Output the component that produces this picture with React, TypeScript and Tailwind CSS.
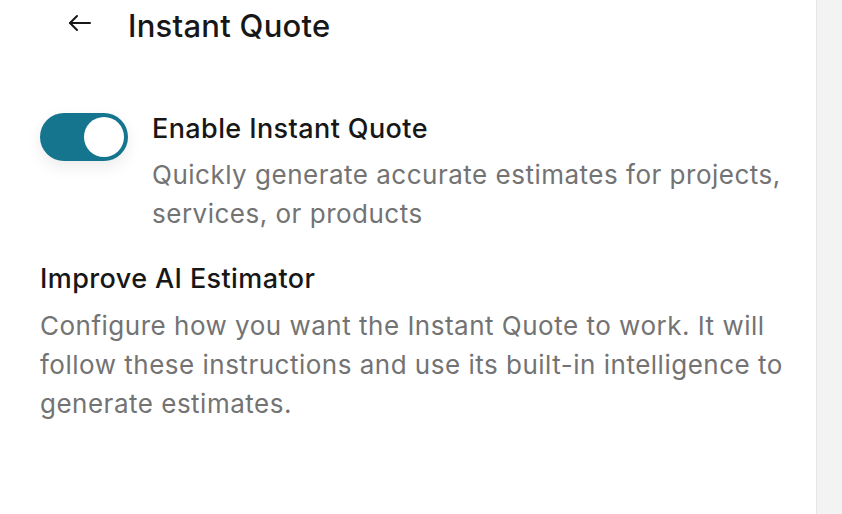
import React, { useState } from 'react';

const BackArrow: React.FC = () => (
  <svg width="24" height="18" viewBox="0 0 24 18" fill="none" stroke="#171717" strokeWidth="2" strokeLinecap="round" strokeLinejoin="round">
    <path d="M22 9H2" />
    <path d="M9 2 2 9l7 7" />
  </svg>
);

const App: React.FC = () => {
  const [enabled, setEnabled] = useState(true);

  return (
    <div className="flex h-[514px] w-full bg-white font-['Inter',sans-serif] text-[#171717]">
      <main className="flex-1 border-r border-[#e6e6e6] pl-10 pr-4">
        {/* Header */}
        <div className="flex h-[52px] items-center">
          <button className="mb-[6px] ml-7 flex h-6 w-6 items-center justify-center">
            <BackArrow />
          </button>
          <h1 className="ml-9 text-[31px] font-medium leading-8 tracking-[0.25px]">Instant Quote</h1>
        </div>

        {/* Toggle section */}
        <section className="mt-[61px] flex gap-6">
          <button
            onClick={() => setEnabled(!enabled)}
            className={`flex h-12 w-[88px] shrink-0 items-center rounded-full p-1 shadow-[0_6px_16px_rgba(0,0,0,0.08)] ${
              enabled ? 'justify-end bg-[#15758e]' : 'justify-start bg-gray-300'
            }`}
          >
            <span className="h-10 w-10 rounded-full bg-white" />
          </button>
          <div>
            <h2 className="text-[27px] font-medium leading-8 tracking-[0.4px]">Enable Instant Quote</h2>
            <p className="mt-[10px] text-[26px] leading-[39px] tracking-[0.5px] text-[#737373]">
              Quickly generate accurate estimates for projects, services, or products
            </p>
          </div>
        </section>

        {/* Estimator section */}
        <section className="mt-[30px]">
          <h2 className="text-[27px] font-medium leading-8 tracking-[0.4px]">Improve AI Estimator</h2>
          <p className="mt-[11px] text-[26px] leading-[39px] tracking-[0.5px] text-[#737373]">
            Configure how you want the Instant Quote to work. It will follow these instructions and use its built-in
            intelligence to generate estimates.
          </p>
        </section>
      </main>
      <aside className="w-[25px] bg-[#f3f3f3]" />
    </div>
  );
};

export default App;
